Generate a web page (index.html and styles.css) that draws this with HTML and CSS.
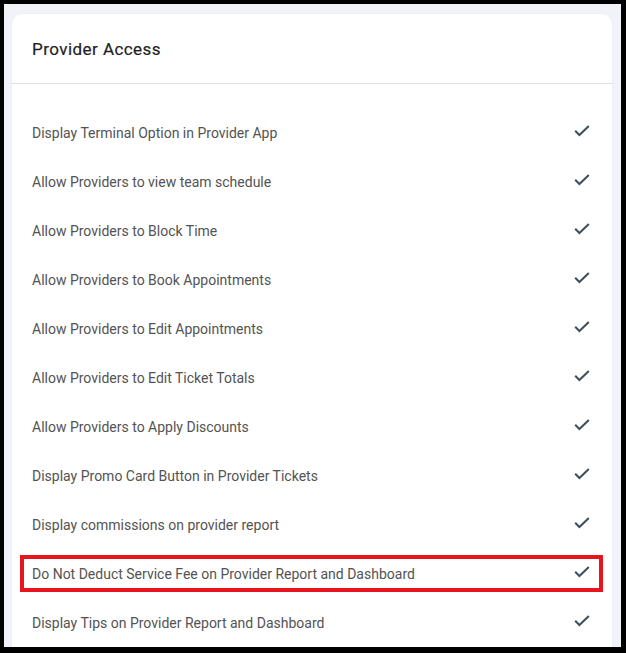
FILE: index.html
```html
<!DOCTYPE html>
<html>
<head>
<meta charset="utf-8">
<link rel="stylesheet" href="styles.css">
</head>
<body>
<div class="frame">
  <div class="card">
    <div class="card-header">Provider Access</div>
    <ul class="list">
      <li class="row"><span>Display Terminal Option in Provider App</span><svg class="check" viewBox="0 0 16 12"><polyline points="1.2,5.8 5.4,10 14.8,1"/></svg></li>
      <li class="row"><span>Allow Providers to view team schedule</span><svg class="check" viewBox="0 0 16 12"><polyline points="1.2,5.8 5.4,10 14.8,1"/></svg></li>
      <li class="row"><span>Allow Providers to Block Time</span><svg class="check" viewBox="0 0 16 12"><polyline points="1.2,5.8 5.4,10 14.8,1"/></svg></li>
      <li class="row"><span>Allow Providers to Book Appointments</span><svg class="check" viewBox="0 0 16 12"><polyline points="1.2,5.8 5.4,10 14.8,1"/></svg></li>
      <li class="row"><span>Allow Providers to Edit Appointments</span><svg class="check" viewBox="0 0 16 12"><polyline points="1.2,5.8 5.4,10 14.8,1"/></svg></li>
      <li class="row"><span>Allow Providers to Edit Ticket Totals</span><svg class="check" viewBox="0 0 16 12"><polyline points="1.2,5.8 5.4,10 14.8,1"/></svg></li>
      <li class="row"><span>Allow Providers to Apply Discounts</span><svg class="check" viewBox="0 0 16 12"><polyline points="1.2,5.8 5.4,10 14.8,1"/></svg></li>
      <li class="row"><span>Display Promo Card Button in Provider Tickets</span><svg class="check" viewBox="0 0 16 12"><polyline points="1.2,5.8 5.4,10 14.8,1"/></svg></li>
      <li class="row"><span>Display commissions on provider report</span><svg class="check" viewBox="0 0 16 12"><polyline points="1.2,5.8 5.4,10 14.8,1"/></svg></li>
      <li class="row highlighted"><span>Do Not Deduct Service Fee on Provider Report and Dashboard</span><svg class="check" viewBox="0 0 16 12"><polyline points="1.2,5.8 5.4,10 14.8,1"/></svg></li>
      <li class="row"><span>Display Tips on Provider Report and Dashboard</span><svg class="check" viewBox="0 0 16 12"><polyline points="1.2,5.8 5.4,10 14.8,1"/></svg></li>
    </ul>
  </div>
</div>
</body>
</html>
```

FILE: styles.css
```css
* { box-sizing: border-box; }
html, body { margin: 0; padding: 0; }
body {
  width: 626px;
  height: 653px;
  overflow: hidden;
  font-family: Roboto, "Liberation Sans", sans-serif;
}
.frame {
  width: 626px;
  height: 653px;
  overflow: hidden;
  border-style: solid;
  border-color: #000;
  border-width: 4px 5px 6px 4px;
  background: #f2f3f8;
  padding: 10px 9px 0 8px;
}
.card {
  background: #fff;
  border-radius: 10px 10px 0 0;
  box-shadow: 0 0 3px rgba(0,0,0,0.04);
  min-height: 700px;
}
.card-header {
  height: 70px;
  display: flex;
  align-items: center;
  padding: 0 20px;
  font-size: 17px;
  font-weight: 400;
  -webkit-text-stroke: 0.2px #1e1e1e;
  color: #1e1e1e;
  letter-spacing: 0.45px;
  border-bottom: 1px solid #dedede;
}
.list {
  list-style: none;
  margin: 0;
  padding: 24px 0 0 0;
}
.row {
  position: relative;
  height: 49px;
  display: flex;
  align-items: center;
  justify-content: space-between;
  padding: 0 22px 0 20px;
  font-size: 14px;
  color: #535353;
}
.check {
  width: 16px;
  height: 12px;
  fill: none;
  stroke: #3d4f5c;
  stroke-width: 2;
  margin-top: -3px;
}
.highlighted::after {
  content: "";
  position: absolute;
  left: 8px;
  right: 9px;
  top: 6px;
  bottom: 6px;
  border: 4px solid #e8151f;
  pointer-events: none;
}
```
